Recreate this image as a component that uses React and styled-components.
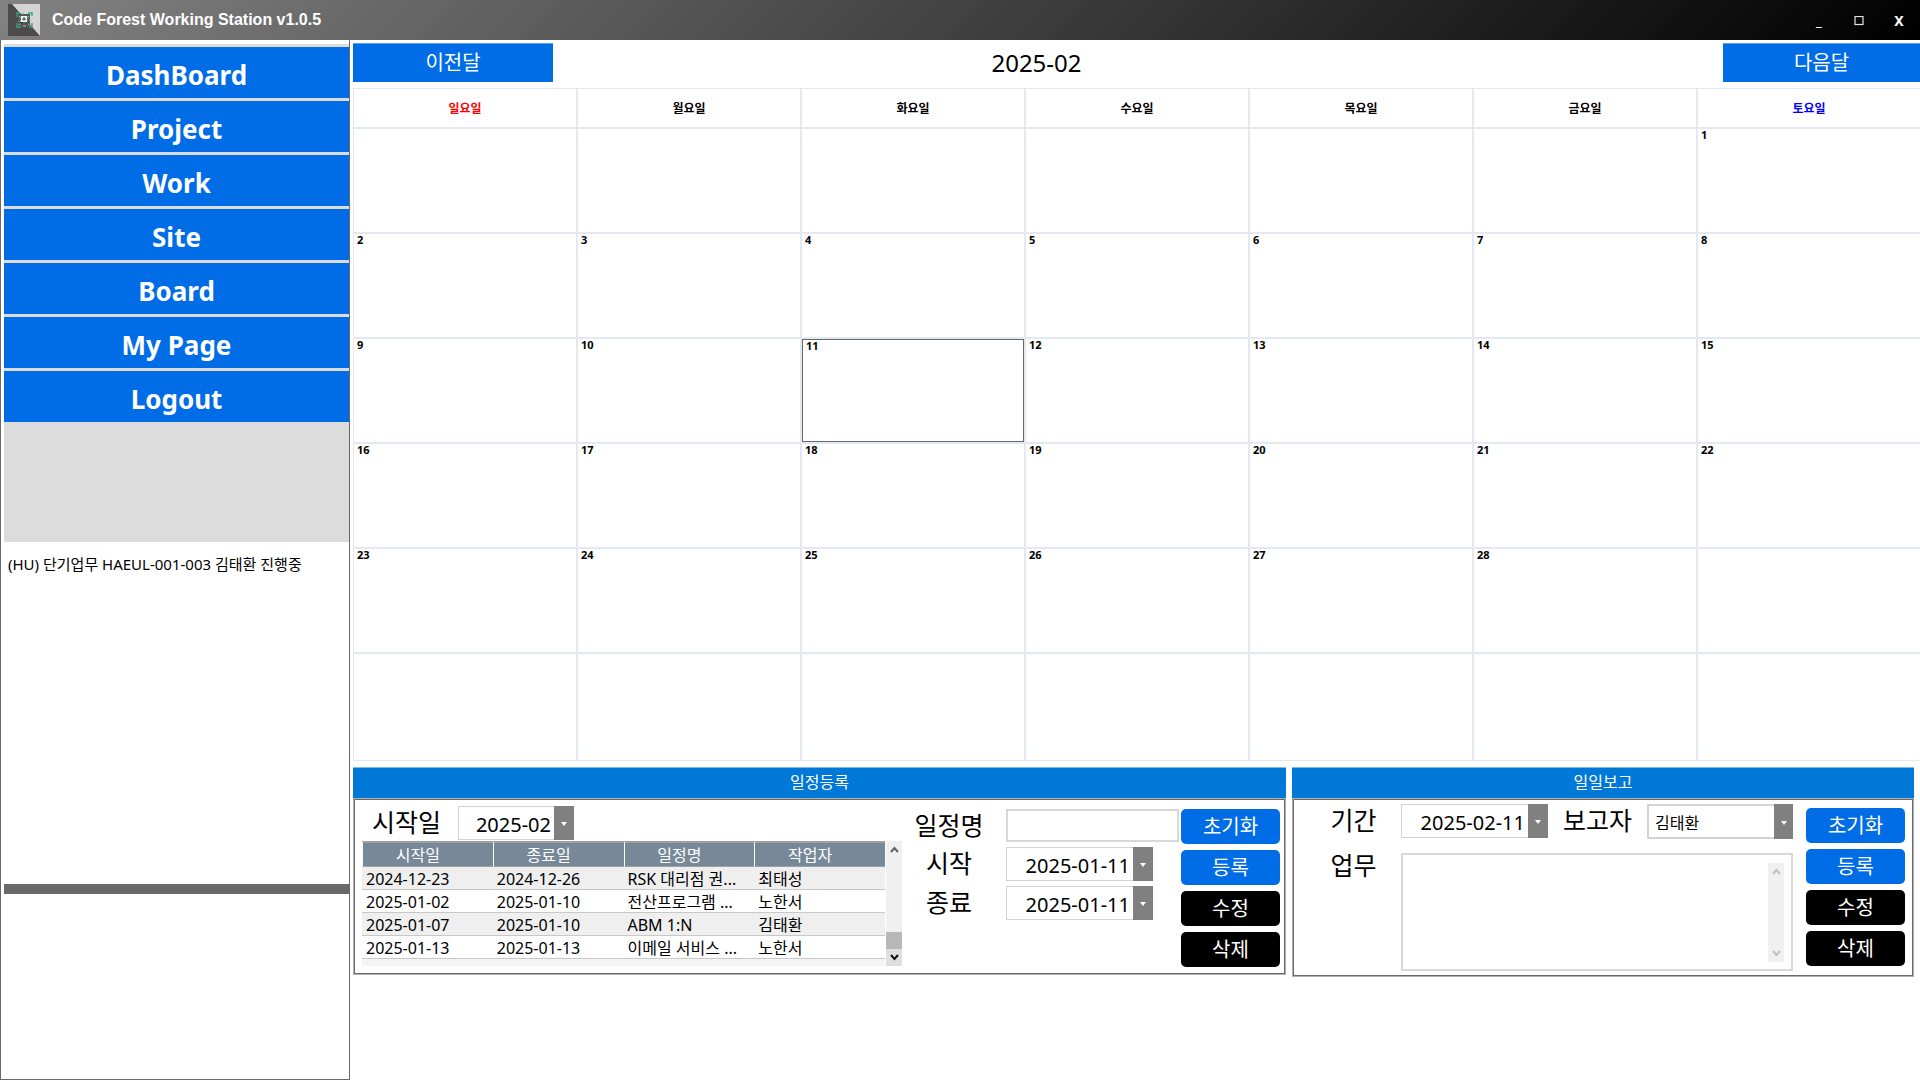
import styled, { createGlobalStyle, css } from "styled-components";
import { useState } from "react";

const MENUS = ["DashBoard", "Project", "Work", "Site", "Board", "My Page", "Logout"];
const DAYS = ["일요일", "월요일", "화요일", "수요일", "목요일", "금요일", "토요일"];
const FIRST_DAY = 6;
const LAST_DATE = 28;
const TODAY = 11;

const SCHEDULES = [
  { start: "2024-12-23", end: "2024-12-26", name: "RSK 대리점 권...", worker: "최태성" },
  { start: "2025-01-02", end: "2025-01-10", name: "전산프로그램 ...", worker: "노한서" },
  { start: "2025-01-07", end: "2025-01-10", name: "ABM 1:N", worker: "김태환" },
  { start: "2025-01-13", end: "2025-01-13", name: "이메일 서비스 ...", worker: "노한서" },
];

function getWeeks() {
  const weeks = [];
  for (let w = 0; w < 6; w++) {
    const week = [];
    for (let d = 0; d < 7; d++) {
      const date = w * 7 + d - FIRST_DAY + 1;
      week.push(date > 0 && date <= LAST_DATE ? date : null);
    }
    weeks.push(week);
  }
  return weeks;
}

function Logo() {
  return (
    <svg width="32" height="32" viewBox="0 0 32 32">
      <rect width="32" height="32" fill="#d4d4d4" />
      <path d="M0 0H4L32 32H0Z" fill="#4c4a4a" />
      <path d="M10 10h12v13H10z" fill="#555b59" />
      <path d="M9 13v-4h3M20 9h4v3M9 19v4h4M24 19v4h-3" stroke="#2fa585" strokeWidth="1.4" fill="none" />
      <path d="M11 12l2 2M21 12l-2 2M11 21l2-2M21 21l-2-2M14 9h2M11 17h2M21 16h2M15 22h3" stroke="#a9b5b1" fill="none" />
      <rect x="13" y="12" width="6" height="6" fill="#f1f6f4" />
      <path d="M16 13v4M14 15h4" stroke="#1f5c4a" />
      <path d="M12 19h3M18 20h2M12 10h1" stroke="#202625" />
    </svg>
  );
}

function Caret() {
  return (
    <svg width="6" height="4" viewBox="0 0 6 4">
      <path d="M0 0h6L3 4z" fill="#fff" />
    </svg>
  );
}

function Chevron({ down, color }) {
  return (
    <svg width="9" height="7" viewBox="0 0 9 7">
      <path d={down ? "M1 1L4.5 5L8 1" : "M1 6L4.5 2L8 6"} stroke={color} strokeWidth="2" fill="none" />
    </svg>
  );
}

function DatePicker({ id, value, short }) {
  const [date, setDate] = useState(value);

  return (
    <PickerBox $short={short}>
      <PickerInput id={id} value={date} onChange={(e) => setDate(e.target.value)} />
      <PickerButton type="button" aria-label="날짜 선택">
        <Caret />
      </PickerButton>
    </PickerBox>
  );
}

function ActionButtons() {
  return (
    <Actions>
      <ActionButton type="button">초기화</ActionButton>
      <ActionButton type="button">등록</ActionButton>
      <ActionButton type="button" $dark>수정</ActionButton>
      <ActionButton type="button" $dark>삭제</ActionButton>
    </Actions>
  );
}

function Calendar() {
  return (
    <CalendarTable>
      <thead>
        <tr>
          {DAYS.map((day, i) => (
            <DayName key={day} $index={i}>{day}</DayName>
          ))}
        </tr>
      </thead>
      <tbody>
        {getWeeks().map((week, w) => (
          <Week key={w}>
            {week.map((date, d) => (
              <DateCell key={d} $today={date === TODAY}>{date}</DateCell>
            ))}
          </Week>
        ))}
      </tbody>
    </CalendarTable>
  );
}

function SchedulePanel() {
  return (
    <Panel>
      <PanelTitle>일정등록</PanelTitle>
      <ScheduleBody>
        <ListArea>
          <FilterRow>
            <Label htmlFor="filter-month">시작일</Label>
            <DatePicker id="filter-month" value="2025-02" short />
          </FilterRow>
          <GridArea>
            <GridScroll>
              <ScheduleTable>
                <thead>
                  <tr>
                    <th>시작일</th>
                    <th>종료일</th>
                    <th>일정명</th>
                    <th>작업자</th>
                  </tr>
                </thead>
                <tbody>
                  {SCHEDULES.map((item) => (
                    <tr key={item.start}>
                      <td>{item.start}</td>
                      <td>{item.end}</td>
                      <td>{item.name}</td>
                      <td>{item.worker}</td>
                    </tr>
                  ))}
                </tbody>
              </ScheduleTable>
            </GridScroll>
            <Rail>
              <RailEnd><Chevron color="#606060" /></RailEnd>
              <RailThumb />
              <RailEnd $pressed><Chevron down color="#111" /></RailEnd>
            </Rail>
          </GridArea>
        </ListArea>

        <ScheduleForm>
          <Label htmlFor="schedule-name">일정명</Label>
          <TextInput id="schedule-name" />
          <Label htmlFor="schedule-start">시작</Label>
          <DatePicker id="schedule-start" value="2025-01-11" />
          <Label htmlFor="schedule-end">종료</Label>
          <DatePicker id="schedule-end" value="2025-01-11" />
        </ScheduleForm>
        <ActionButtons />
      </ScheduleBody>
    </Panel>
  );
}

function ReportPanel() {
  return (
    <Panel>
      <PanelTitle>일일보고</PanelTitle>
      <ReportBody>
        <ReportForm>
          <Label htmlFor="report-date">기간</Label>
          <DatePicker id="report-date" value="2025-02-11" />
          <Label htmlFor="reporter">보고자</Label>
          <SelectBox>
            <Select id="reporter" defaultValue="김태환">
              <option>김태환</option>
              <option>노한서</option>
              <option>최태성</option>
            </Select>
            <SelectArrow><Caret /></SelectArrow>
          </SelectBox>
          <Label htmlFor="report-work" $top>업무</Label>
          <TextAreaBox>
            <TextArea id="report-work" />
            <Rail>
              <RailEnd><Chevron color="#bfbfbf" /></RailEnd>
              <RailSpace />
              <RailEnd><Chevron down color="#bfbfbf" /></RailEnd>
            </Rail>
          </TextAreaBox>
        </ReportForm>
        <ActionButtons />
      </ReportBody>
    </Panel>
  );
}

function App() {
  return (
    <Page>
      <GlobalStyle />
      <TitleBar>
        <Logo />
        <AppName>Code Forest Working Station v1.0.5</AppName>
        <WindowButton type="button">_</WindowButton>
        <WindowButton type="button" aria-label="최대화">
          <svg width="10" height="10" viewBox="0 0 10 10">
            <rect x="1" y="0.5" width="8" height="8" stroke="#e4e4e4" fill="none" strokeWidth="1.2" />
          </svg>
        </WindowButton>
        <WindowButton type="button">X</WindowButton>
      </TitleBar>

      <Content>
        <Sidebar>
          <Menu>
            {MENUS.map((menu) => (
              <MenuButton key={menu} type="button">{menu}</MenuButton>
            ))}
          </Menu>
          <WorkList>
            <li>(HU) 단기업무 HAEUL-001-003 김태환 진행중</li>
          </WorkList>
          <Splitter />
          <SubList />
        </Sidebar>

        <Main>
          <MonthNav>
            <MonthButton type="button">이전달</MonthButton>
            <MonthTitle>2025-02</MonthTitle>
            <MonthButton type="button" $next>다음달</MonthButton>
          </MonthNav>
          <Calendar />
          <Panels>
            <SchedulePanel />
            <ReportPanel />
          </Panels>
        </Main>
      </Content>
    </Page>
  );
}

export default App;

// |||||| estilos |||||| //

const GlobalStyle = createGlobalStyle`
  * {
    box-sizing: border-box;
  }

  body {
    margin: 0;
    background: #fff;
    color: #000;
    font-family: "Noto Sans", "Noto Sans CJK KR", sans-serif;
  }

  button, input, select, textarea {
    font-family: inherit;
    color: inherit;
    margin: 0;
  }
`;

const Page = styled.div`
  display: flex;
  flex-direction: column;
  min-height: 100vh;
`;

const TitleBar = styled.header`
  display: flex;
  align-items: center;
  height: 40px;
  padding: 0 1px 0 8px;
  background: linear-gradient(135deg, #828282, #000);
  color: #fff;
`;

const AppName = styled.h1`
  flex: 1;
  margin: 0 0 0 12px;
  font-family: "Liberation Sans", sans-serif;
  font-size: 16px;
  line-height: 20px;
`;

const WindowButton = styled.button`
  width: 40px;
  height: 38px;
  padding: 0;
  border: none;
  background: none;
  color: #fff;
  font-size: 14px;
  font-weight: 700;
`;

const Content = styled.div`
  flex: 1;
  display: grid;
  grid-template-columns: 350px minmax(0, 1fr);
`;

const Sidebar = styled.aside`
  display: flex;
  flex-direction: column;
  padding: 4px 0 0 3px;
  border: 1px solid #696969;
  border-top: none;
`;

const Menu = styled.nav`
  display: flex;
  flex-direction: column;
  gap: 3px;
  padding: 3px 0 120px;
  background: #dcdcdc;
`;

const blueButton = css`
  border: none;
  background: #006ce6;
  color: #fff;
`;

const MenuButton = styled.button`
  ${blueButton}
  height: 51px;
  padding: 4px 0 0;
  font-size: 26px;
  font-weight: 700;
  line-height: 32px;
`;

const WorkList = styled.ul`
  flex: 1;
  margin: 0;
  padding: 12px 4px;
  list-style: none;
  font-size: 15px;
  line-height: 20px;
`;

const Splitter = styled.div`
  height: 10px;
  background: #696969;
`;

const SubList = styled.div`
  height: 185px;
`;

const Main = styled.main`
  padding: 3px 0 0 3px;
  overflow: hidden;
`;

const MonthNav = styled.div`
  display: flex;
  align-items: center;
  margin-bottom: 6px;
`;

const MonthButton = styled.button`
  ${blueButton}
  width: ${({ $next }) => ($next ? "197px" : "200px")};
  height: 39px;
  padding: 0;
  border-top: 1px solid #5c9fe6;
  font-size: 20px;
  line-height: 32px;
`;

const MonthTitle = styled.h2`
  flex: 1;
  margin: 0;
  padding-right: 203px;
  font-size: 24px;
  font-weight: 400;
  line-height: 32px;
  text-align: center;
`;

const CalendarTable = styled.table`
  width: calc(100% + 1px);
  table-layout: fixed;
  border-collapse: separate;
  border-spacing: 0;
`;

const DayName = styled.th`
  height: 40px;
  padding: 2px 0 0;
  border: 1px solid #e4e8f2;
  color: ${({ $index }) => ($index === 0 ? "#f00" : $index === 6 ? "#00f" : "#000")};
  font-size: 12px;
  line-height: 16px;
`;

const Week = styled.tr`
  height: 105px;

  &:last-child {
    height: 108px;
  }
`;

const DateCell = styled.td`
  padding: ${({ $today }) => ($today ? "1px 4px" : "0 3px")};
  border: 1px solid #e4e8f2;
  box-shadow: ${({ $today }) => ($today ? "inset 0 0 0 1px #696969" : "none")};
  font-size: 11px;
  font-weight: 700;
  line-height: 12px;
  vertical-align: top;
`;

const Panels = styled.div`
  display: grid;
  grid-template-columns: minmax(0, 3fr) minmax(0, 2fr);
  align-items: start;
  gap: 6px;
  padding: 6px 6px 0 0;
`;

const Panel = styled.section`
  min-width: 0;
`;

const PanelTitle = styled.h3`
  margin: 0;
  padding-bottom: 2px;
  border-top: 1px solid #7db9e6;
  background: #0078d7;
  color: #fff;
  font-size: 16px;
  font-weight: 400;
  line-height: 28px;
  text-align: center;
`;

const panelBody = css`
  display: flex;
  border: 2px solid #696969;
  outline: 1px solid #b0b0b0;
  outline-offset: -1px;
`;

const ScheduleBody = styled.div`
  ${panelBody}
  padding: 6px 4px 6px 7px;
`;

const ReportBody = styled.div`
  ${panelBody}
  gap: 13px;
  padding: 4px 7px 4px 12px;
`;

const Label = styled.label`
  font-size: 25px;
  line-height: ${({ $top }) => ($top ? "24px" : "32px")};
  text-align: center;
  white-space: nowrap;
`;

const ListArea = styled.div`
  flex: 1;
  min-width: 0;
`;

const FilterRow = styled.div`
  display: flex;
  gap: 17px;
  padding-left: 10px;
  margin-bottom: 1px;
`;

const GridArea = styled.div`
  display: flex;
  gap: 1px;
  height: 125px;
`;

const GridScroll = styled.div`
  flex: 1;
  min-width: 0;
  overflow: hidden;
  background: #f4f4f4;
`;

const ScheduleTable = styled.table`
  width: 100%;
  table-layout: fixed;
  border-collapse: separate;
  border-spacing: 0;
  font-size: 16px;
  line-height: 20px;

  th {
    height: 26px;
    padding: 0 20px 0 0;
    border-top: 2px solid #a0a0a0;
    border-bottom: 1px solid #a0a0a0;
    border-left: 1px solid #fff;
    background: #778899;
    color: #fff;
    font-weight: 400;
  }

  td {
    height: 23px;
    padding: 2px 0 0 4px;
    border-bottom: 1px solid #c8c8c8;
    white-space: nowrap;
  }

  tbody tr {
    background: #fff;
  }

  tbody tr:nth-child(odd) {
    background: #efefef;
  }
`;

const Rail = styled.div`
  display: flex;
  flex-direction: column;
  justify-content: space-between;
  width: 16px;
  background: #f0f0f0;
`;

const RailEnd = styled.div`
  display: flex;
  align-items: center;
  justify-content: center;
  height: 17px;
  background: ${({ $pressed }) => ($pressed ? "#dfdfdf" : "transparent")};
`;

const RailThumb = styled.div`
  height: 17px;
  margin-top: auto;
  background: #b8b8b8;
`;

const RailSpace = styled.div`
  flex: 1;
`;

const ScheduleForm = styled.div`
  display: grid;
  grid-template-columns: 94px 173px;
  grid-template-rows: 33px 34px 34px;
  gap: 5px 10px;
  padding-top: 3px;
`;

const PickerBox = styled.div`
  display: flex;
  width: ${({ $short }) => ($short ? "116px" : "147px")};
  height: 34px;
`;

const PickerInput = styled.input`
  flex: 1;
  min-width: 0;
  padding: 4px 3px 0 0;
  border: 1px solid #d3d3d3;
  border-right: none;
  background: #fff;
  font-size: 20px;
  line-height: 28px;
  text-align: right;
  outline: none;
`;

const PickerButton = styled.button`
  display: flex;
  align-items: center;
  justify-content: center;
  width: 20px;
  padding: 2px 0 0;
  border: none;
  background: #808080;
`;

const TextInput = styled.input`
  min-width: 0;
  padding: 0 6px;
  border: 2px solid #d8d8d8;
  background: #fff;
  font-size: 20px;
  outline: none;
`;

const Actions = styled.div`
  display: flex;
  flex-direction: column;
  gap: 6px;
  width: 99px;
  margin: 3px 0 0 2px;

  ${ReportBody} & {
    margin: 4px 0 0;
  }
`;

const ActionButton = styled.button`
  height: 35px;
  padding: 0;
  border: none;
  border-radius: 5px;
  background: ${({ $dark }) => ($dark ? "#000" : "#006ce6")};
  color: #fff;
  font-size: 20px;
  line-height: 28px;
`;

const ReportForm = styled.div`
  flex: 1;
  display: grid;
  grid-template-columns: 95px 147px 99px minmax(0, 1fr);
  grid-template-rows: 35px 118px;
  row-gap: 14px;
`;

const SelectBox = styled.div`
  position: relative;
  display: flex;
`;

const Select = styled.select`
  flex: 1;
  appearance: none;
  padding: 3px 24px 0 6px;
  border: 2px solid #d3d3d3;
  border-radius: 0;
  background: #fff;
  font-size: 16px;
  line-height: 24px;
  outline: none;
`;

const SelectArrow = styled.span`
  position: absolute;
  top: 0;
  right: 0;
  bottom: 0;
  display: flex;
  align-items: center;
  justify-content: center;
  width: 19px;
  padding-top: 2px;
  background: #808080;
  pointer-events: none;
`;

const TextAreaBox = styled.div`
  grid-column: 2 / -1;
  display: flex;
  padding: 8px 7px 7px 2px;
  border: 2px solid #d8d8d8;
`;

const TextArea = styled.textarea`
  flex: 1;
  border: none;
  background: #fff;
  font-size: 16px;
  resize: none;
  outline: none;
`;
